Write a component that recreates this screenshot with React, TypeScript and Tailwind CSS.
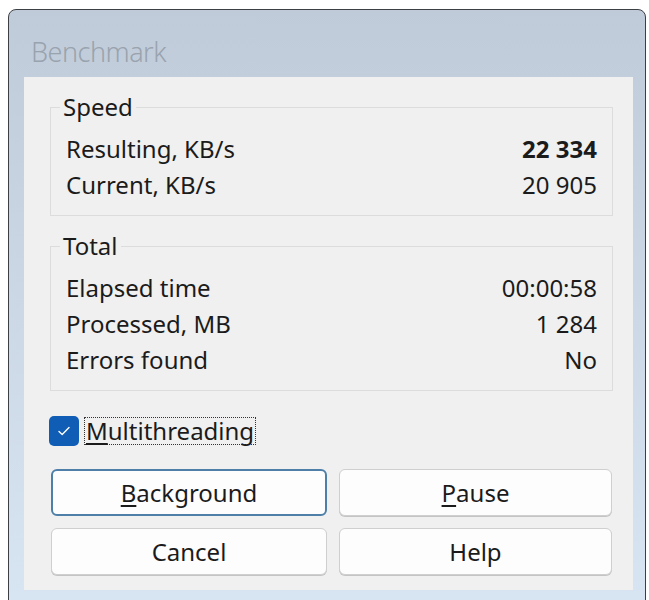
import React from "react";

type Row = { label: string; value: string; bold?: boolean };

const SPEED: Row[] = [
  { label: "Resulting, KB/s", value: "22 334", bold: true },
  { label: "Current, KB/s", value: "20 905" },
];

const TOTAL: Row[] = [
  { label: "Elapsed time", value: "00:00:58" },
  { label: "Processed, MB", value: "1 284" },
  { label: "Errors found", value: "No" },
];

function Group({ title, rows, className }: { title: string; rows: Row[]; className?: string }) {
  return (
    <fieldset className={`border border-[#dcdcdc] px-[15px] pb-[12px] ${className ?? ""}`}>
      <legend className="ml-[-6px] px-[3px] leading-[26px]">{title}</legend>
      <div className="pt-[11px]">
        {rows.map((r) => (
          <div key={r.label} className="flex h-[36px] items-center justify-between">
            <span>{r.label}</span>
            <span className={r.bold ? "font-bold" : ""}>{r.value}</span>
          </div>
        ))}
      </div>
    </fieldset>
  );
}

function Button({ children, focused }: { children: React.ReactNode; focused?: boolean }) {
  return (
    <button
      className={`h-[47px] rounded-[6px] bg-[#fdfdfd] ${
        focused ? "border-2 border-[#4d7fa8]" : "border border-[#cfcfcf] shadow-[0_1px_0_#c4c4c4]"
      }`}
    >
      {children}
    </button>
  );
}

export default function App() {
  return (
    <div className="h-[600px] overflow-hidden bg-white pl-2 pr-[3px] pt-[9px] font-['Noto_Sans',sans-serif] text-[24px] text-[#1b1b1b]">
      <div className="flex h-[610px] flex-col rounded-t-[8px] border border-[#3c3f44] bg-gradient-to-b from-[#c0cbd9] to-[#d8e5f3]">
        {/* title bar */}
        <div className="flex h-[67px] items-center pl-[22px] pt-[18px] text-[27px] font-light tracking-[-0.5px] text-[#99a3ae]">
          Benchmark
        </div>

        {/* client area */}
        <div className="ml-[15px] mr-[12px] h-[513px] bg-[#f0f0f0] pl-[26px] pr-[20px] pt-[17px]">
          <Group title="Speed" rows={SPEED} />
          <Group title="Total" rows={TOTAL} className="mt-[17px]" />

          <div className="ml-[-1px] mt-[25px] flex items-center">
            <span className="flex h-[30px] w-[30px] items-center justify-center rounded-[5px] bg-[#0f5db4]">
              <svg width="16" height="16" viewBox="0 0 16 16" fill="none">
                <path d="M3 8.5l3.2 3L13 4.5" stroke="white" strokeWidth="1.4" strokeLinecap="round" strokeLinejoin="round" />
              </svg>
            </span>
            <span className="ml-[5px] border border-dotted border-[#333] px-[1px] leading-[26px]">
              <span className="underline underline-offset-[3px]">M</span>ultithreading
            </span>
          </div>

          <div className="ml-[1px] mt-[23px] grid grid-cols-[276px_273px] gap-[12px]">
            <Button focused>
              <span className="underline underline-offset-[3px]">B</span>ackground
            </Button>
            <Button>
              <span className="underline underline-offset-[3px]">P</span>ause
            </Button>
            <Button>Cancel</Button>
            <Button>Help</Button>
          </div>
        </div>
      </div>
    </div>
  );
}
